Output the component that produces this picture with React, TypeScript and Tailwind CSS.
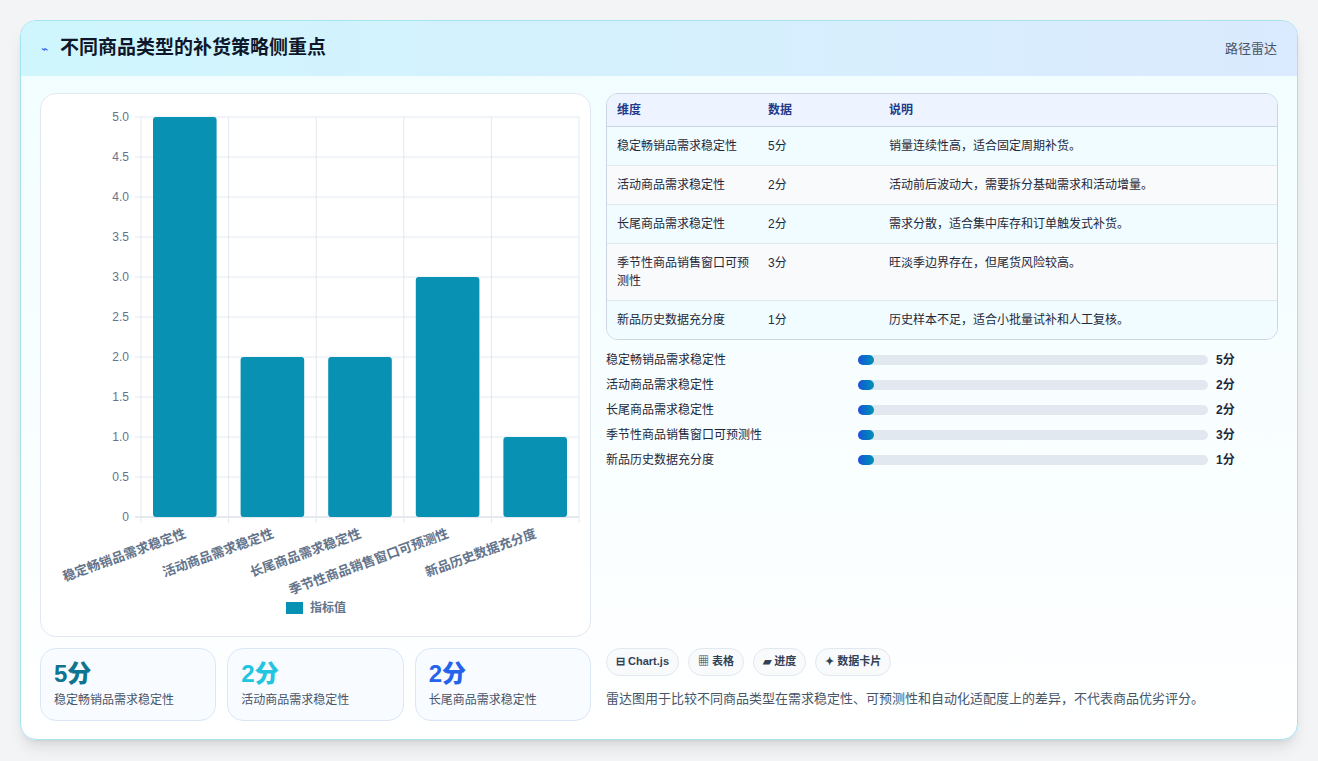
import React from "react";

const rows = [
  ["稳定畅销品需求稳定性", "5分", "销量连续性高，适合固定周期补货。"],
  ["活动商品需求稳定性", "2分", "活动前后波动大，需要拆分基础需求和活动增量。"],
  ["长尾商品需求稳定性", "2分", "需求分散，适合集中库存和订单触发式补货。"],
  ["季节性商品销售窗口可预测性", "3分", "旺淡季边界存在，但尾货风险较高。"],
  ["新品历史数据充分度", "1分", "历史样本不足，适合小批量试补和人工复核。"],
];
const vals = [5, 2, 2, 3, 1];

function Chart() {
  // coordinates relative to card (card at 40,93)
  const x0 = 100, x1 = 538, yTop = 23, yBot = 423;
  const cw = (x1 - x0) / 5;
  const ticks = [0, 0.5, 1, 1.5, 2, 2.5, 3, 3.5, 4, 4.5, 5];
  return (
    <svg width="550" height="543" className="block" style={{ fontFamily: "'Liberation Sans','Noto Sans CJK SC',sans-serif" }}>
      {ticks.map((t) => {
        const y = yBot - t * 80;
        return (
          <g key={t}>
            <line x1={x0 - 6} x2={x1} y1={y} y2={y} stroke={t === 0 ? "#cbd5e1" : "#e2e8f0"} />
            <text x={x0 - 12} y={y + 4} textAnchor="end" fontSize="12" fill="#64748b">
              {t === 0 ? "0" : t.toFixed(1)}
            </text>
          </g>
        );
      })}
      {[0, 1, 2, 3, 4, 5].map((i) => (
        <line key={i} x1={x0 + i * cw} x2={x0 + i * cw} y1={yTop} y2={yBot + 6} stroke="#e2e8f0" />
      ))}
      {vals.map((v, i) => (
        <rect key={i} x={x0 + i * cw + 12} y={yBot - v * 80} width={cw - 24} height={v * 80} rx="3" fill="#0891b2" />
      ))}
      {rows.map((r, i) => (
        <text
          key={i}
          x={0}
          y={0}
          transform={`translate(${x0 + i * cw + cw / 2 + 2},${yBot + 20}) rotate(-20)`}
          textAnchor="end"
          fontSize="13"
          fontWeight="bold"
          fill="#64748b"
        >
          {r[0]}
        </text>
      ))}
      <rect x="245" y="508" width="17" height="12" fill="#0891b2" />
      <text x="269" y="518" fontSize="12" fontWeight="bold" fill="#64748b">指标值</text>
    </svg>
  );
}

export default function App() {
  return (
    <div className="w-[1318px] h-[761px] bg-[#f3f4f6] p-5" style={{ fontFamily: "'Liberation Sans','Noto Sans CJK SC',sans-serif" }}>
      <div className="h-[720px] rounded-2xl border border-[#a5e4ef] bg-gradient-to-b from-[#f0fdff] to-white shadow-lg overflow-hidden flex flex-col">
        <div className="h-[55px] shrink-0 flex items-center justify-between px-5 bg-gradient-to-r from-[#cff6fd] to-[#dbeafe]">
          <div className="flex items-center gap-3">
            <span className="text-[12px] text-[#2563eb]">⌁</span>
            <span className="text-[19px] font-bold text-[#0f172a]">不同商品类型的补货策略侧重点</span>
          </div>
          <span className="text-[13px] text-[#475569]">路径雷达</span>
        </div>
        <div className="flex gap-[15px] px-[19px] pt-[17px]">
          <div className="w-[551px] flex flex-col gap-[11px]">
            <div className="h-[544px] rounded-2xl border border-[#e2e8f0] bg-white">
              <Chart />
            </div>
            <div className="grid grid-cols-3 gap-[11px]">
              {[
                ["5分", "text-[#0e7490]", "稳定畅销品需求稳定性"],
                ["2分", "text-[#22c5e0]", "活动商品需求稳定性"],
                ["2分", "text-[#2563eb]", "长尾商品需求稳定性"],
              ].map(([v, c, l], i) => (
                <div key={i} className="h-[73px] rounded-2xl border border-[#dbe7f5] bg-[#f8fbff] px-[13px] pt-[10px]">
                  <div className={`text-[24px] font-extrabold leading-[30px] ${c}`}>{v}</div>
                  <div className="text-[12px] text-[#475569] mt-[2px]">{l}</div>
                </div>
              ))}
            </div>
          </div>
          <div className="flex-1 flex flex-col">
            <div className="rounded-xl border border-[#cbd5e1] overflow-hidden text-[12px] text-[#1e293b]">
              <div className="flex h-[33px] items-center bg-[#eef4ff] border-b border-[#cbd5e1] font-bold text-[#1e3a8a]">
                <div className="w-[161px] pl-[10px]">维度</div>
                <div className="w-[121px]">数据</div>
                <div>说明</div>
              </div>
              {rows.map((r, i) => (
                <div key={i} className={`flex py-[10px] ${i % 2 === 0 ? "bg-[#f0fcff]" : "bg-[#f8fafc]"} ${i < 4 ? "border-b border-[#e2e8f0]" : ""}`}>
                  <div className="w-[161px] pl-[10px] pr-2 leading-[18px]">{r[0]}</div>
                  <div className="w-[121px] leading-[18px]">{r[1]}</div>
                  <div className="leading-[18px]">{r[2]}</div>
                </div>
              ))}
            </div>
            <div className="flex flex-col gap-[7px] mt-[11px]">
              {rows.map((r, i) => (
                <div key={i} className="flex items-center h-[18px] text-[12px] text-[#1e293b]">
                  <div className="w-[252px]">{r[0]}</div>
                  <div className="w-[350px] h-[10px] rounded-full bg-[#e2e8f0]">
                    <div className="h-[10px] w-[16px] rounded-full bg-gradient-to-r from-[#1d4ed8] to-[#0891b2]" />
                  </div>
                  <div className="ml-[8px] font-bold">{r[1]}</div>
                </div>
              ))}
            </div>
            <div className="mt-auto flex gap-[9px]">
              {["⊟ Chart.js", "▦ 表格", "▰ 进度", "✦ 数据卡片"].map((c) => (
                <span key={c} className="h-[28px] px-[9px] flex items-center rounded-full border border-[#e2e8f0] bg-[#f8fafc] text-[11px] font-bold text-[#334155]">{c}</span>
              ))}
            </div>
            <div className="mt-[13px] text-[13px] text-[#475569] mb-[13px]">
              雷达图用于比较不同商品类型在需求稳定性、可预测性和自动化适配度上的差异，不代表商品优劣评分。
            </div>
          </div>
        </div>
      </div>
    </div>
  );
}
